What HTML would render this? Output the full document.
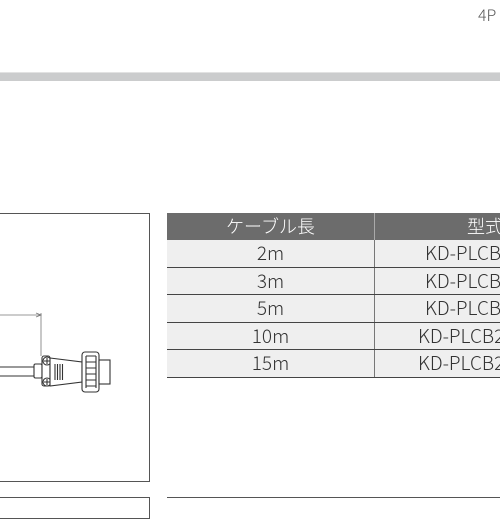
<html><head><style>
body{margin:0;width:500px;height:500px;overflow:hidden;background:#fff;position:relative;font-family:"Liberation Sans","Noto Sans CJK JP",sans-serif}
.bar{position:absolute;left:0;top:72px;width:500px;height:8px;background:#cbcccd;border-top:1px solid #e2e2e2}
.p4{position:absolute;left:478px;top:2px;font-size:16px;color:#555;font-family:"Noto Sans CJK JP",sans-serif;font-weight:300}
.box{position:absolute;left:-1px;top:213px;width:149px;height:267px;border:1px solid #555}
.box2{position:absolute;left:-1px;top:497px;width:149px;height:20px;border:1px solid #555}
table{position:absolute;left:167px;top:213px;border-collapse:collapse;width:380px;font-family:"Noto Sans CJK JP","Liberation Sans",sans-serif;font-weight:300}
td,th{padding:0;text-align:center;font-size:19px;color:#333;border-bottom:1px solid #444}
td>div{height:26.5px;line-height:26.5px;overflow:hidden}
th>div{height:27px;line-height:27px;overflow:hidden}
th{background:#6c6c6c;color:#fff;font-weight:300;border-bottom:none;font-size:18px}
td{background:#efefef}
.c1{width:207px;border-right:1px solid #777}
.t2{position:absolute;left:167px;top:497px;width:340px;height:1px;background:#555}
</style></head><body>
<div class="p4">4P</div>
<div class="bar"></div>
<div class="box"></div>
<div class="box2"></div>
<div class="t2"></div>
<table>
<tr><th class="c1" style="border-right:1px solid #aaa"><div>ケーブル長</div></th><th style="text-align:left;padding-left:92px"><div>型式</div></th></tr>
<tr><td class="c1"><div>2m</div></td><td style="text-align:left;padding-left:50px"><div>KD-PLCB</div></td></tr>
<tr><td class="c1"><div>3m</div></td><td style="text-align:left;padding-left:50px"><div>KD-PLCB</div></td></tr>
<tr><td class="c1"><div>5m</div></td><td style="text-align:left;padding-left:50px"><div>KD-PLCB</div></td></tr>
<tr><td class="c1"><div>10m</div></td><td style="text-align:left;padding-left:43px"><div>KD-PLCB2</div></td></tr>
<tr><td class="c1"><div>15m</div></td><td style="text-align:left;padding-left:43px"><div>KD-PLCB2</div></td></tr>
</table>
<svg style="position:absolute;left:0;top:0" width="150" height="500" fill="none" stroke="#333" stroke-width="1.1">
<path d="M0 315H41M36 313L41 315L36 317M41 313V356" stroke="#777" stroke-width="0.8"/>
<path d="M0 367H34M0 376H34"/>
<rect x="34" y="364" width="8" height="14" rx="1.5" fill="#fff"/>
<rect x="42" y="356" width="8" height="30" rx="2" fill="#fff"/>
<circle cx="47" cy="361" r="4" fill="#fff"/><path d="M44 361H50M47 358V364"/>
<circle cx="47" cy="382" r="4" fill="#fff"/><path d="M44 382H50M47 379V385"/>
<path d="M50 358L82 362V382L50 386Z" fill="#fff"/>
<path d="M55 364V380M57.5 364V380M60 364V380M62.5 364V380"/>
<rect x="82" y="352" width="17" height="40" rx="3" fill="#fff"/>
<path d="M86 356H96M86 362H96M86 368H96M86 374H96M86 380H96M86 386H96M86 356V388M96 356V388"/>
<rect x="99" y="360" width="11" height="24" fill="#fff"/>
</svg>
</body></html>
